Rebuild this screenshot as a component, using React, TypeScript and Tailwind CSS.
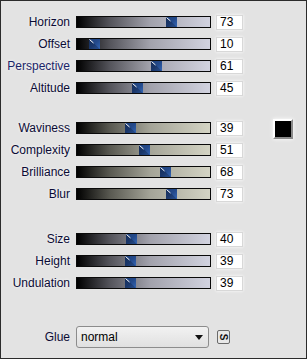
import React from "react";

type Row = { label: string; value: number; blue?: boolean };

const g1: Row[] = [
  { label: "Horizon", value: 73 },
  { label: "Offset", value: 10 },
  { label: "Perspective", value: 61, blue: true },
  { label: "Altitude", value: 45 },
];
const g2: Row[] = [
  { label: "Waviness", value: 39 },
  { label: "Complexity", value: 51 },
  { label: "Brilliance", value: 68 },
  { label: "Blur", value: 73 },
];
const g3: Row[] = [
  { label: "Size", value: 40 },
  { label: "Height", value: 39 },
  { label: "Undulation", value: 39 },
];

function Thumb({ value }: { value: number }) {
  const left = Math.round((value * 122) / 100);
  return (
    <div className="absolute top-0 h-full w-[11px]" style={{ left }}>
      <svg width="11" height="10" viewBox="0 0 11 10" className="block h-full w-full" preserveAspectRatio="none">
        <defs>
          <linearGradient id="tg" x1="0" y1="0" x2="1" y2="1">
            <stop offset="0" stopColor="#13284d" />
            <stop offset="0.5" stopColor="#1c3a70" />
            <stop offset="1" stopColor="#3d74c6" />
          </linearGradient>
        </defs>
        <rect x="0" y="0" width="11" height="10" fill="url(#tg)" />
        <polygon points="0,0 11,10 0,10" fill="#1a3566" opacity="0.55" />
        <polygon points="0,0 11,0 11,10" fill="#2b5aa6" opacity="0.5" />
        <line x1="0.5" y1="0.5" x2="4.5" y2="4" stroke="#ffffff" strokeWidth="1" />
      </svg>
    </div>
  );
}

function SliderRow({ row, beige, extra }: { row: Row; beige?: boolean; extra?: React.ReactNode }) {
  return (
    <div className="flex h-[22px] items-center">
      <div
        className={`w-[69px] text-right text-[12px] leading-none [text-shadow:0_0_3px_#fff] ${
          row.blue ? "text-[#1a2468]" : "text-[#0b0b35]"
        }`}
      >
        {row.label}
      </div>
      <div
        className={`relative ml-[6px] h-[12px] w-[135px] border border-[#0a0a0a] ${
          beige
            ? "bg-[linear-gradient(90deg,#000000_0%,#5a5a52_25%,#a4a498_55%,#d4d4c4_100%)]"
            : "bg-[linear-gradient(90deg,#000000_0%,#55555c_25%,#a2a2ac_55%,#d2d3e0_100%)]"
        }`}
      >
        <Thumb value={row.value} />
      </div>
      <div className="ml-[5px] flex h-[15px] w-[27px] items-center border border-[#d8d8d8] bg-white pl-[3px] text-[12px] leading-none text-black shadow-[0_0_3px_#ffffff]">
        {row.value}
      </div>
      {extra}
    </div>
  );
}

export default function App() {
  return (
    <div
      className="box-border h-[359px] w-[307px] overflow-hidden border border-[#2b2b2b] bg-[#e3e3e3]"
      style={{ fontFamily: '"Liberation Sans", Arial, sans-serif' }}
    >
      <div className="mt-[10px] flex flex-col">
        {g1.map((r) => (
          <SliderRow key={r.label} row={r} />
        ))}
      </div>
      <div className="mt-[18px] flex flex-col">
        {g2.map((r, i) => (
          <SliderRow
            key={r.label}
            row={r}
            beige
            extra={
              i === 0 ? (
                <div className="ml-[30px] mt-[2px] self-start box-border h-[20px] w-[20px] border-2 border-t-white border-l-white border-b-[#8a8a8a] border-r-[#8a8a8a] bg-black shadow-[0_0_4px_#ffffff]" />
              ) : null
            }
          />
        ))}
      </div>
      <div className="mt-[23px] flex flex-col">
        {g3.map((r) => (
          <SliderRow key={r.label} row={r} />
        ))}
      </div>
      <div className="mt-[32px] flex h-[22px] items-center">
        <div className="w-[69px] text-right text-[12px] leading-none text-[#0b0b35]">Glue</div>
        <div className="ml-[6px] flex h-[22px] w-[133px] items-center justify-between rounded-[3px] border border-[#8c8c8c] bg-[linear-gradient(#f2f2f2,#e0e0e0)] pl-[4px] pr-[5px] text-[12px] leading-none text-black">
          <span>normal</span>
          <svg width="8" height="5" viewBox="0 0 8 5">
            <polygon points="0,0 8,0 4,5" fill="#111" />
          </svg>
        </div>
        <div className="ml-[8px] flex h-[14px] w-[13px] items-center justify-center rounded-[2px] border border-[#6a6a6a] bg-[#e8e8e8]">
          <span className="block rotate-90 text-[10px] font-bold leading-none text-[#111]">S</span>
        </div>
      </div>
    </div>
  );
}
